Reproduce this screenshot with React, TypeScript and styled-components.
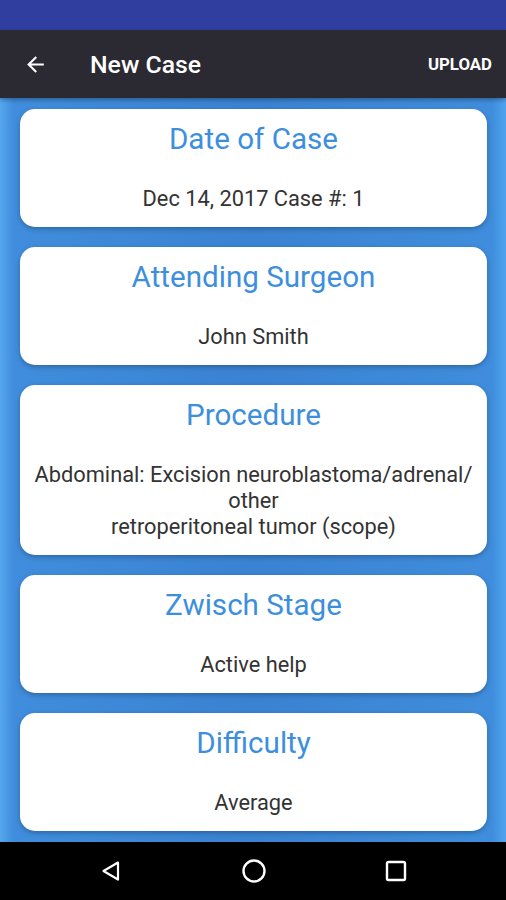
import React from 'react'
import styled, { createGlobalStyle } from 'styled-components'

const GlobalStyle = createGlobalStyle`
  html, body {
    margin: 0;
    padding: 0;
    background: #000;
  }
  body {
    font-family: Roboto, 'Liberation Sans', sans-serif;
  }
`

const Screen = styled.div`
  width: 506px;
  height: 900px;
  display: flex;
  flex-direction: column;
  overflow: hidden;
`

const StatusBar = styled.div`
  height: 30px;
  flex-shrink: 0;
  background: #303f9f;
`

const Toolbar = styled.div`
  height: 68px;
  flex-shrink: 0;
  background: #2b2a33;
  display: flex;
  align-items: center;
  padding: 0 14px 0 22px;
  color: #fff;
  box-shadow: 0 2px 4px rgba(0, 0, 0, 0.3);
  position: relative;
  z-index: 1;
`

const BackButton = styled.div`
  width: 26px;
  height: 26px;
  display: flex;
  align-items: center;
  justify-content: center;
  margin-right: 42px;
`

const Title = styled.div`
  flex: 1;
  font-size: 24.8px;
  font-weight: 500;
`

const Action = styled.div`
  font-size: 16.8px;
  font-weight: 700;
`

const Content = styled.div`
  flex: 1;
  min-height: 0;
  overflow: hidden;
  background: linear-gradient(
    to right,
    #55a6ee 0px,
    #3f8ddc 14px,
    #3a82d2 50%,
    #3f8ddc 492px,
    #4ea4ef 506px
  );
  padding: 11px 19px 0 20px;
  display: flex;
  flex-direction: column;
  gap: 20px;
`

const Card = styled.div`
  background: #fff;
  border-radius: 15px;
  box-shadow: 0 2px 5px rgba(0, 0, 0, 0.25);
  min-height: 118px;
  box-sizing: border-box;
  padding: 12px 6px 15px;
  display: flex;
  flex-direction: column;
  align-items: center;
  text-align: center;
  flex-shrink: 0;
`

const CardTitle = styled.div`
  font-size: 29.6px;
  color: #3d8fde;
  line-height: 36px;
  margin-bottom: 29px;
`

const CardBody = styled.div`
  font-size: 21.8px;
  color: #333;
  line-height: 26px;
`

const NavBar = styled.div`
  height: 58px;
  flex-shrink: 0;
  background: #000;
  display: flex;
  align-items: center;
  justify-content: space-between;
  padding: 0 98px 0 99px;
`

const items: { title: string; body: string[] }[] = [
  { title: 'Date of Case', body: ['Dec 14, 2017 Case #: 1'] },
  { title: 'Attending Surgeon', body: ['John Smith'] },
  {
    title: 'Procedure',
    body: ['Abdominal: Excision neuroblastoma/adrenal/', 'other', 'retroperitoneal tumor (scope)'],
  },
  { title: 'Zwisch Stage', body: ['Active help'] },
  { title: 'Difficulty', body: ['Average'] },
]

export default function App() {
  return (
    <>
      <GlobalStyle />
      <Screen>
        <StatusBar />
        <Toolbar>
          <BackButton>
            <svg width="25" height="25" viewBox="0 0 24 24">
              <path d="M20 11H7.83l5.59-5.59L12 4l-8 8 8 8 1.41-1.41L7.83 13H20v-2z" fill="#fff" />
            </svg>
          </BackButton>
          <Title>New Case</Title>
          <Action>UPLOAD</Action>
        </Toolbar>
        <Content>
          {items.map((it) => (
            <Card key={it.title}>
              <CardTitle>{it.title}</CardTitle>
              <CardBody>
                {it.body.map((line, i) => (
                  <div key={i}>{line}</div>
                ))}
              </CardBody>
            </Card>
          ))}
        </Content>
        <NavBar>
          <svg width="24" height="24" viewBox="0 0 24 24">
            <path d="M19 3.5 L4.5 12 L19 20.5 Z" fill="none" stroke="#fff" strokeWidth="2.2" strokeLinejoin="round" />
          </svg>
          <svg width="26" height="26" viewBox="0 0 26 26">
            <circle cx="13" cy="13" r="10.5" fill="none" stroke="#fff" strokeWidth="2.4" />
          </svg>
          <svg width="24" height="24" viewBox="0 0 24 24">
            <rect x="3" y="3" width="18" height="18" rx="1.5" fill="none" stroke="#fff" strokeWidth="2.4" />
          </svg>
        </NavBar>
      </Screen>
    </>
  )
}
